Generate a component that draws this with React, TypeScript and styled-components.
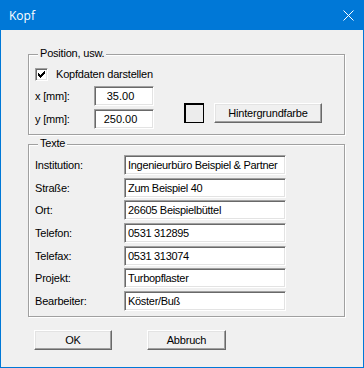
import { Fragment } from "react";
import styled, { createGlobalStyle } from "styled-components";

const GlobalStyle = createGlobalStyle`
  html, body {
    margin: 0;
    padding: 0;
    background: #fff;
  }
  * {
    box-sizing: border-box;
  }
`;

const fields = [
  { label: "Institution:", value: "Ingenieurbüro Beispiel & Partner" },
  { label: "Straße:", value: "Zum Beispiel 40" },
  { label: "Ort:", value: "26605 Beispielbüttel" },
  { label: "Telefon:", value: "0531 312895" },
  { label: "Telefax:", value: "0531 313074" },
  { label: "Projekt:", value: "Turbopflaster" },
  { label: "Bearbeiter:", value: "Köster/Buß" },
];

// classic 7x7 check mark, one column at a time
const checkColumns = [2, 3, 4, 3, 2, 1, 0];

export default function App() {
  return (
    <>
      <GlobalStyle />
      <Window>
        <TitleBar>
          <Title>Kopf</Title>
          <svg width="11" height="11" viewBox="0 0 11 11">
            <path d="M0.5 0.5 L10.5 10.5 M10.5 0.5 L0.5 10.5" stroke="#fff" strokeWidth="1" />
          </svg>
        </TitleBar>
        <Body>
          <Group $height={81} $pad="13px 0 5px 6px">
            <Caption>Position, usw.</Caption>
            <PosLayout>
              <div>
                <CheckRow>
                  <CheckBox>
                    <svg width="7" height="7" viewBox="0 0 7 7" shapeRendering="crispEdges">
                      {checkColumns.map((top, i) => (
                        <rect key={i} x={i} y={top} width="1" height="3" fill="#000" />
                      ))}
                    </svg>
                  </CheckBox>
                  <span>Kopfdaten darstellen</span>
                </CheckRow>
                <PosGrid>
                  <Label>x [mm]:</Label>
                  <NumInput>35.00</NumInput>
                  <Label>y [mm]:</Label>
                  <NumInput>250.00</NumInput>
                </PosGrid>
              </div>
              <ColorPick>
                <Swatch />
                <Button $width={108}>Hintergrundfarbe</Button>
              </ColorPick>
            </PosLayout>
          </Group>
          <Group $height={173} $pad="10px 0 5px 6px" $gap={9}>
            <Caption>Texte</Caption>
            <TextGrid>
              {fields.map((f) => (
                <Fragment key={f.label}>
                  <Label>{f.label}</Label>
                  <TextInput>{f.value}</TextInput>
                </Fragment>
              ))}
            </TextGrid>
          </Group>
          <ButtonRow>
            <Button $width={78}>OK</Button>
            <Button $width={79}>Abbruch</Button>
          </ButtonRow>
        </Body>
      </Window>
    </>
  );
}

const Window = styled.div`
  width: 364px;
  height: 368px;
  display: flex;
  flex-direction: column;
  font-family: "Liberation Sans", Arial, sans-serif;
  font-size: 11px;
  letter-spacing: -0.2px;
  color: #000;
`;

const TitleBar = styled.div`
  height: 30px;
  flex-shrink: 0;
  background: #0078d7;
  display: flex;
  align-items: center;
  justify-content: space-between;
  padding: 0 10px 0 9px;
`;

const Title = styled.span`
  color: #fff;
  font-family: "Open Sans", "Noto Sans", sans-serif;
  font-size: 12px;
  letter-spacing: 0;
`;

const Body = styled.div`
  flex: 1;
  background: #f0f0f0;
  border: 1px solid #0078d7;
  border-top: none;
  padding: 24px 0 0 27px;
`;

const Group = styled.div<{ $height: number; $pad: string; $gap?: number }>`
  position: relative;
  width: 317px;
  height: ${(p) => p.$height}px;
  margin-top: ${(p) => p.$gap ?? 0}px;
  border: 1px solid #a0a0a0;
  box-shadow: inset 1px 1px 0 #fff, 1px 1px 0 #fff;
  padding: ${(p) => p.$pad};
`;

const Caption = styled.span`
  position: absolute;
  top: -8px;
  left: 9px;
  padding: 0 2px;
  line-height: 13px;
  background: #f0f0f0;
`;

const PosLayout = styled.div`
  display: flex;
  height: 100%;
`;

const CheckRow = styled.div`
  display: flex;
  align-items: center;
  gap: 8px;
  height: 13px;
  margin-bottom: 5px;
  line-height: 13px;
`;

const CheckBox = styled.span`
  width: 13px;
  height: 13px;
  display: flex;
  align-items: center;
  justify-content: center;
  background: #fff;
  border: 1px solid;
  border-color: #a0a0a0 #fff #fff #a0a0a0;
  box-shadow: inset 1px 1px 0 #696969, inset -1px -1px 0 #e3e3e3;
`;

const PosGrid = styled.div`
  display: grid;
  grid-template-columns: 59px 60px;
  grid-auto-rows: 20px;
  row-gap: 3px;
`;

const Label = styled.span`
  display: flex;
  align-items: center;
  white-space: nowrap;
`;

const Sunken = styled.div`
  height: 20px;
  background: #fff;
  border: 1px solid;
  border-color: #a0a0a0 #fff #fff #a0a0a0;
  box-shadow: inset 1px 1px 0 #696969, inset -1px -1px 0 #e3e3e3;
  display: flex;
  align-items: center;
  white-space: nowrap;
  overflow: hidden;
  font-size: 11px;
  letter-spacing: -0.3px;
`;

const NumInput = styled(Sunken)`
  justify-content: center;
  padding-right: 7px;
  letter-spacing: 0;
`;

const TextInput = styled(Sunken)`
  padding-left: 3px;
`;

const ColorPick = styled.div`
  align-self: flex-end;
  display: flex;
  align-items: center;
  gap: 10px;
  margin: 0 0 6px 30px;
`;

const Swatch = styled.span`
  width: 20px;
  height: 20px;
  background: #ececec;
  border: 1px solid #000;
  box-shadow: inset 1px 1px 0 #000;
`;

const Button = styled.button<{ $width: number }>`
  width: ${(p) => p.$width}px;
  height: 20px;
  padding: 0;
  font: inherit;
  letter-spacing: inherit;
  color: #000;
  background: #f0f0f0;
  border: 1px solid;
  border-color: #fff #696969 #696969 #fff;
  box-shadow: inset -1px -1px 0 #a0a0a0, inset 1px 1px 0 #e3e3e3;
`;

const TextGrid = styled.div`
  display: grid;
  grid-template-columns: 89px 162px;
  grid-auto-rows: 20px;
  row-gap: 2.67px;
`;

const ButtonRow = styled.div`
  display: flex;
  gap: 35px;
  margin: 13px 0 0 6px;
`;
